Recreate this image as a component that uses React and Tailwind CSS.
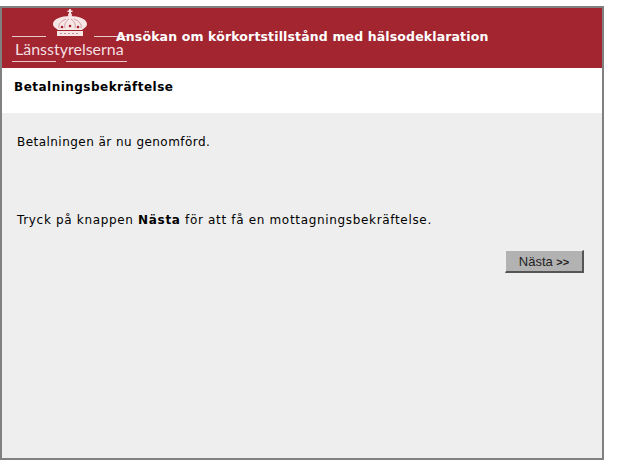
import React from 'react';

const Crown = () => (
  <svg width="34" height="28" viewBox="0 0 34 28" className="block">
    <rect x="16" y="0" width="2" height="5" fill="#f6e6e6" />
    <rect x="14.5" y="1.5" width="5" height="1.5" fill="#f6e6e6" />
    <circle cx="17" cy="6" r="2" fill="#f6e6e6" />
    <path d="M17 7 C8 7 0 10 0 15 C0 18 3 19 5 21 L29 21 C31 19 34 18 34 15 C34 10 26 7 17 7 Z" fill="#f6e6e6" />
    <path d="M6 19 C5 15 8 12 13 10 M28 19 C29 15 26 12 21 10 M12 19 C11 15 13 12 16 10 M22 19 C23 15 21 12 18 10" stroke="#c98a90" strokeWidth="0.8" fill="none" />
    <circle cx="9" cy="18" r="1.3" fill="#a32530" />
    <circle cx="17" cy="17" r="1.3" fill="#a32530" />
    <circle cx="25" cy="18" r="1.3" fill="#a32530" />
    <rect x="4" y="22" width="26" height="5" fill="#f6e6e6" />
    <path d="M7 24.5 H27" stroke="#c98a90" strokeWidth="1" strokeDasharray="2 2" />
  </svg>
);

const Logo = () => (
  <div className="w-[116px] shrink-0 flex flex-col items-stretch">
    <div className="flex items-end">
      <div className="w-[34px] h-px bg-[#e8c8ca]" />
      <div className="ml-[7px]"><Crown /></div>
      <div className="ml-[7px] w-[34px] h-px bg-[#e8c8ca]" />
    </div>
    <div className="pl-[3px] text-[#f3dfe0] text-[16px] leading-[24px] whitespace-nowrap font-['Lato',sans-serif]">
      Länsstyrelserna
    </div>
    <div className="flex">
      <div className="w-[44px] h-px bg-[#e8c8ca]" />
      <div className="ml-[10px] w-[61px] h-px bg-[#e8c8ca]" />
    </div>
  </div>
);

export default function App() {
  return (
    <div className="w-[620px] h-[472px] bg-white pt-[6px] font-['DejaVu_Sans',sans-serif] text-black">
      <div className="w-[604px] h-[454px] border-2 border-[#808080] flex flex-col">
        <div className="h-[60px] bg-[#a32530] flex items-start pl-[10px] pt-[1px] shrink-0">
          <Logo />
          <h1 className="-ml-[12px] mt-[20px] text-white text-[12.5px] leading-[16px] font-bold tracking-[0.14px] whitespace-nowrap">
            Ansökan om körkortstillstånd med hälsodeklaration
          </h1>
        </div>
        <div className="h-[45px] bg-white pl-[12px] pt-[11px] shrink-0">
          <h2 className="text-[12px] leading-[16px] font-bold tracking-[0.48px]">Betalningsbekräftelse</h2>
        </div>
        <div className="flex-1 bg-[#eeeeee] pl-[15px] pr-[18px] pt-[21px] text-[12px] leading-[16px]">
          <p className="tracking-[0.46px]">Betalningen är nu genomförd.</p>
          <p className="mt-[62px] tracking-[0.67px]">
            Tryck på knappen <b>Nästa</b> för att få en mottagningsbekräftelse.
          </p>
          <div className="flex justify-end mt-[22px]">
            <button className="w-[79px] h-[23px] bg-[#b2b2b2] border-t border-l border-b-2 border-r-2 border-t-[#f0f0f0] border-l-[#f0f0f0] border-r-[#555555] border-b-[#555555] text-[13px] leading-none text-[#222222] font-['Liberation_Sans',sans-serif]">
              Nästa <b className="text-[11px]">&gt;&gt;</b>
            </button>
          </div>
        </div>
      </div>
    </div>
  );
}
